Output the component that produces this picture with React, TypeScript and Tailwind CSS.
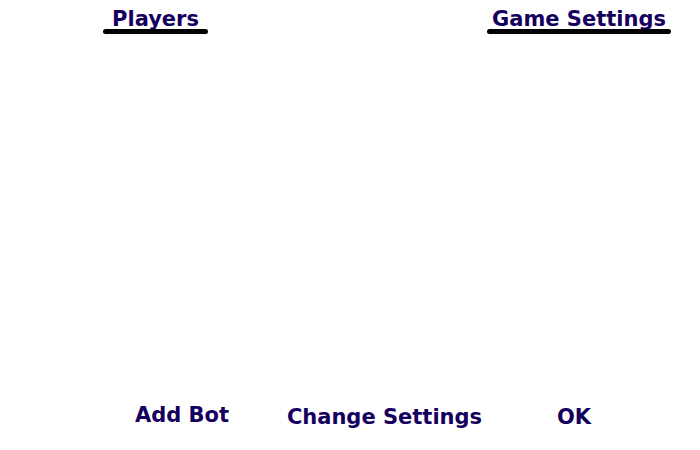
import React from 'react';

const font = { fontFamily: '"DejaVu Sans", Verdana, sans-serif' };

const App = () => {
  return <div className="w-[700px] h-[450px] bg-white flex flex-col text-[#15005e] font-bold text-[21px] leading-[20px]" style={font}>
      <div className="flex items-start pt-[9px]">
        <div className="ml-[103px] w-[105px] flex flex-col">
          <div className="text-center">Players</div>
          <div className="h-[5px] bg-black rounded-full"></div>
        </div>
        <div className="ml-[279px] w-[184px] flex flex-col">
          <div className="text-center">Game Settings</div>
          <div className="h-[5px] bg-black rounded-full"></div>
        </div>
      </div>
      <div className="mt-auto flex items-start pb-[23px]">
        <button className="ml-[122px] w-[120px] text-center">Add Bot</button>
        <button className="ml-[42px] mt-[2px] w-[201px] text-center">Change Settings</button>
        <button className="ml-[49px] mt-[2px] w-[80px] text-center">OK</button>
      </div>
    </div>;
};

export default App;
